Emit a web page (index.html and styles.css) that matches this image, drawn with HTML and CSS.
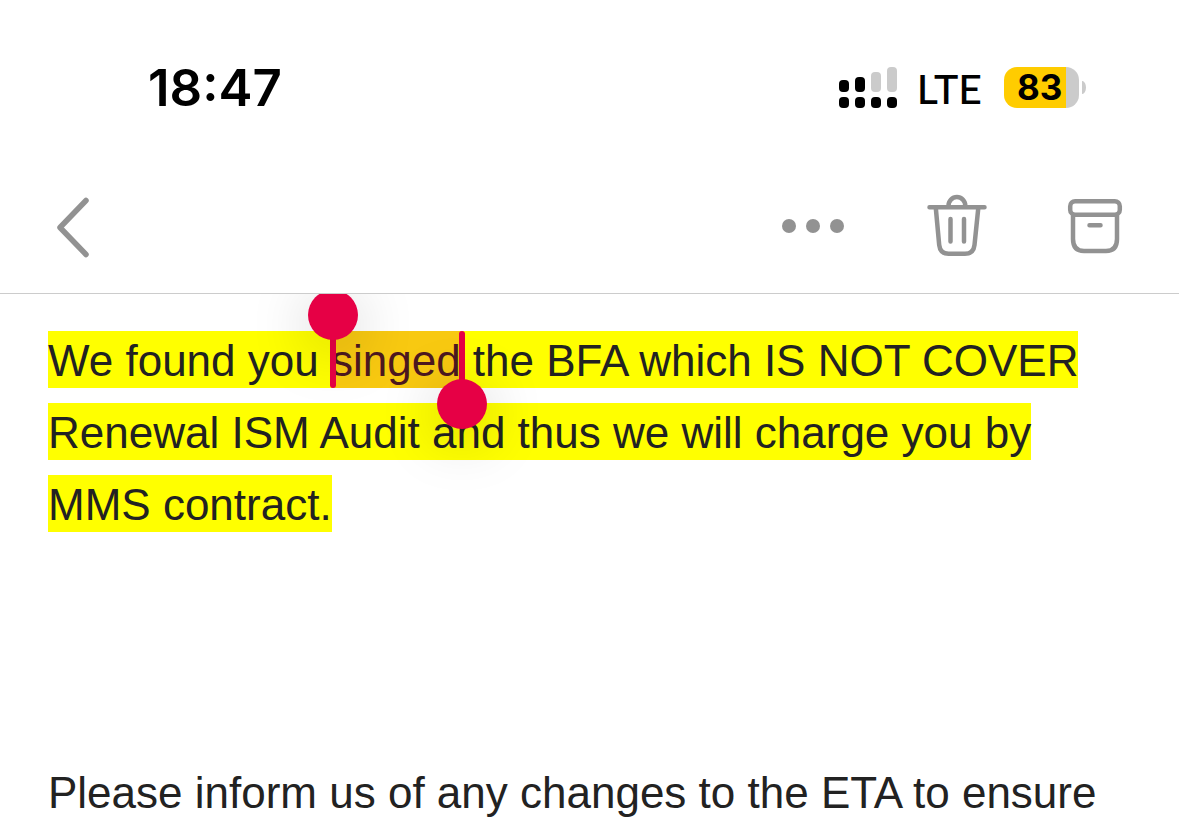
FILE: index.html
```html
<!DOCTYPE html>
<html lang="en">
<head>
    <meta charset="UTF-8">
    <meta name="viewport" content="width=device-width, initial-scale=1.0">
    <title>Mail</title>
    <link rel="stylesheet" href="styles.css">
</head>
<body>

    <div class="status-bar">
        <time class="clock">18:47</time>
        <div class="status-icons">
            <svg class="signal" width="58" height="41" viewBox="0 0 58 41" aria-hidden="true">
                <g fill="#000">
                    <rect x="0" y="13" width="10" height="12" rx="4"/>
                    <rect x="16" y="10" width="10" height="15" rx="4"/>
                    <rect x="0" y="30" width="10" height="11" rx="4"/>
                    <rect x="16" y="30" width="10" height="11" rx="4"/>
                    <rect x="32" y="30" width="10" height="11" rx="4"/>
                    <rect x="48" y="30" width="10" height="11" rx="4"/>
                </g>
                <g fill="#cbcbcb">
                    <rect x="32" y="5" width="10" height="20" rx="4"/>
                    <rect x="48" y="0" width="10" height="25" rx="4"/>
                </g>
            </svg>
            <span class="network">LTE</span>
            <div class="battery">
                <span class="battery-level">83</span>
            </div>
        </div>
    </div>

    <header class="toolbar">
        <button type="button" class="icon-button" aria-label="Back">
            <svg width="34" height="62" viewBox="0 0 34 62" stroke-width="5.500">
                <path d="M30 4.500L4 31.500L30 58.500"/>
            </svg>
        </button>
        <div class="actions">
            <button type="button" class="icon-button" aria-label="More">
                <svg class="dots" width="62" height="62" viewBox="0 0 62 62">
                    <circle cx="7" cy="30" r="7"/>
                    <circle cx="31" cy="30" r="7"/>
                    <circle cx="55" cy="30" r="7"/>
                </svg>
            </button>
            <button type="button" class="icon-button" aria-label="Delete">
                <svg width="60" height="62" viewBox="0 0 60 62" stroke-width="4.500">
                    <path d="M3.500 11.200H58.500M22.500 11V9.500a8.400 8.400 0 0 1 16.800 0V11M9.800 12L13.200 49Q14.200 57.800 22.500 57.800H39Q47.500 57.800 48.500 49L52.300 12M24.500 23V45.500M38 23V45.500"/>
                </svg>
            </button>
            <button type="button" class="icon-button" aria-label="Archive">
                <svg width="54" height="62" viewBox="0 0 54 62" stroke-width="4.500">
                    <rect x="2.200" y="5.200" width="49.600" height="13.500" rx="5"/>
                    <path d="M5 19V43Q5 55 16 55H38Q49 55 49 43V19M21.500 29.300H32.500"/>
                </svg>
            </button>
        </div>
    </header>

    <main class="message">
        <p><span class="highlight">We found you <span class="selection">singed<span class="handle handle-start"></span><span class="handle handle-end"></span></span> the BFA which IS NOT COVER<br>Renewal ISM Audit and thus we will charge you by<br>MMS contract.</span></p>
        <p>Please inform us of any changes to the ETA to ensure</p>
    </main>

</body>
</html>
```
FILE: styles.css
```css
* {
    box-sizing: border-box;
}

body {
    margin: 0;
    height: 100vh;
    display: flex;
    flex-direction: column;
    overflow: hidden;
    background: #fff;
    color: #222;
    font-family: "Liberation Sans", Arial, sans-serif;
}

.status-bar {
    display: flex;
    align-items: center;
    justify-content: space-between;
    height: 160px;
    padding: 15px 100px 0 148px;
    flex-shrink: 0;
    color: #000;
    font-family: Inter, sans-serif;
}

.clock {
    font-size: 51px;
    font-weight: 600;
}

.status-icons {
    display: flex;
    align-items: center;
}

.network {
    margin: 2px 22px 0 20px;
    font-size: 41px;
    font-weight: 500;
    line-height: 48px;
    font-family: Lato, sans-serif;
}

.battery {
    position: relative;
    width: 75px;
    height: 41px;
    padding-left: 13px;
    border-radius: 13px;
    background: linear-gradient(to right, #ffcc00 62px, #cbcbcb 62px);
    line-height: 41px;
}

.battery::after {
    content: "";
    position: absolute;
    top: 14px;
    right: -7px;
    width: 4px;
    height: 13px;
    border-radius: 0 4px 4px 0 / 0 7px 7px 0;
    background: #cbcbcb;
}

.battery-level {
    font-size: 35px;
    font-weight: 700;
}

.toolbar {
    display: flex;
    align-items: center;
    justify-content: space-between;
    height: 134px;
    padding: 0 57px 0 56px;
    flex-shrink: 0;
    border-bottom: 1px solid #ccc;
}

.actions {
    display: flex;
    gap: 82px;
}

.icon-button {
    display: flex;
    padding: 0;
    border: none;
    background: none;
    cursor: pointer;
}

.icon-button svg {
    overflow: visible;
    fill: none;
    stroke: #929292;
    stroke-linecap: round;
    stroke-linejoin: round;
}

.icon-button .dots {
    fill: #929292;
    stroke: none;
}

.message {
    position: relative;
    flex: 1;
    padding: 31px 48px 0;
    overflow: hidden;
    font-size: 44px;
    line-height: 72px;
    white-space: nowrap;
}

.message p {
    margin: 0 0 216px;
}

.highlight {
    padding: 5px 0 3px;
    background: #ffff00;
}

/* selected text with its two drag handles */
.selection {
    position: relative;
    padding: 5px 0 3px;
    background: #f8c911;
    color: #4d1820;
}

.handle {
    position: absolute;
    top: 0;
    bottom: 0;
    width: 6px;
    border-radius: 3px;
    background: #e60045;
}

.handle-start {
    left: -1px;
}

.handle-end {
    right: -4px;
}

.handle::after {
    content: "";
    position: absolute;
    left: -22px;
    width: 50px;
    height: 50px;
    border-radius: 50%;
    background: #e60045;
    box-shadow: 0 10px 60px rgba(0, 0, 0, 0.22);
}

.handle-start::after {
    top: -41px;
}

.handle-end::after {
    bottom: -41px;
}
```
